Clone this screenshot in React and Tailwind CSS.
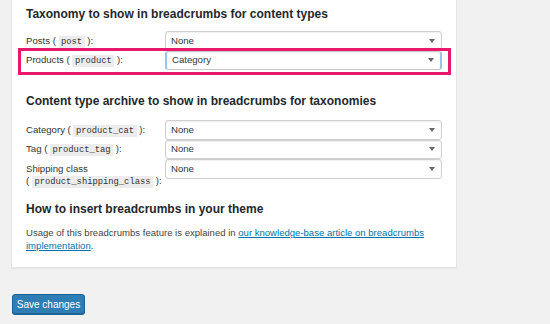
import React from "react";

const Code = ({ children }) => (
  <code className="bg-[#ececec] px-[2.5px] py-[1px] font-['Liberation_Mono',monospace] text-[8.8px] text-[#333]">
    {children}
  </code>
);

const Arrow = () => (
  <svg width="6" height="4" viewBox="0 0 6 4" className="absolute right-[6px] top-1/2 -translate-y-1/2">
    <path d="M0 0 L6 0 L3 4 Z" fill="#666" />
  </svg>
);

const Select = ({ value, focus }) => (
  <div
    className={
      "relative h-full w-[277px] rounded-[3px] border bg-white shadow-[inset_0_1px_2px_rgba(0,0,0,0.07)] " +
      (focus ? "border-[#c9c9c9] border-l-[#9cc4e8] border-r-[#9cc4e8] border-l-2 border-r-2" : "border-[#cfcfcf]")
    }
  >
    <span className="absolute left-[5px] top-1/2 -translate-y-1/2 text-[9.6px] leading-none text-[#32373c]">{value}</span>
    <Arrow />
  </div>
);

const Row = ({ label, value, focus }) => (
  <div className="flex items-start">
    <div className="mt-[3.5px] w-[139px] shrink-0 whitespace-nowrap text-[9.6px] leading-[12.5px] text-[#333]">{label}</div>
    <div className="h-[19.5px]">
      <Select value={value} focus={focus} />
    </div>
  </div>
);

export default function App() {
  return (
    <div className="h-[324px] w-[550px] overflow-hidden bg-[#f1f1f1] pl-[11px] font-['Liberation_Sans',Arial,sans-serif]">
      <div className="w-[446px] border border-t-0 border-[#e5e5e5] bg-white px-[14px] pb-[15px] pt-[7px] shadow-[0_1px_1px_rgba(0,0,0,0.04)]">
        <h2 className="text-[12px] font-bold leading-[14px] text-[#23282d]">
          Taxonomy to show in breadcrumbs for content types
        </h2>
        <div className="mt-[10px]">
          <Row label={<>Posts ( <Code>post</Code> ):</>} value="None" />
          <div className="relative">
            <Row label={<>Products ( <Code>product</Code> ):</>} value="Category" focus />
            <div className="pointer-events-none absolute -left-[8px] -right-[9px] -top-[2.5px] bottom-[-4.5px] border-[3px] border-[#e8186c]" />
          </div>
        </div>
        <h2 className="mt-[24px] text-[12px] font-bold leading-[14px] text-[#23282d]">
          Content type archive to show in breadcrumbs for taxonomies
        </h2>
        <div className="mt-[12px]">
          <Row label={<>Category ( <Code>product_cat</Code> ):</>} value="None" />
          <Row label={<>Tag ( <Code>product_tag</Code> ):</>} value="None" />
          <Row
            label={
              <>
                Shipping class
                <br />( <Code>product_shipping_class</Code> ):
              </>
            }
            value="None"
          />
        </div>
        <h2 className="mt-[13px] text-[12px] font-bold leading-[14px] text-[#23282d]">
          How to insert breadcrumbs in your theme
        </h2>
        <div className="mt-[11.75px] text-[9.55px] leading-[12.5px] text-[#444]">
          <p>
            Usage of this breadcrumbs feature is explained in{" "}
            <a className="text-[#0073aa] underline" href="#">
              our knowledge-base article on breadcrumbs
            </a>
          </p>
          <p>
            <a className="text-[#0073aa] underline" href="#">
              implementation
            </a>
            .
          </p>
        </div>
      </div>
      <button className="mt-[26px] ml-[1px] h-[20px] w-[73px] rounded-[3px] border border-[#1f6394] bg-[#2e7db5] text-[10px] text-white shadow-[0_1px_0_#1f6394]">
        Save changes
      </button>
    </div>
  );
}
